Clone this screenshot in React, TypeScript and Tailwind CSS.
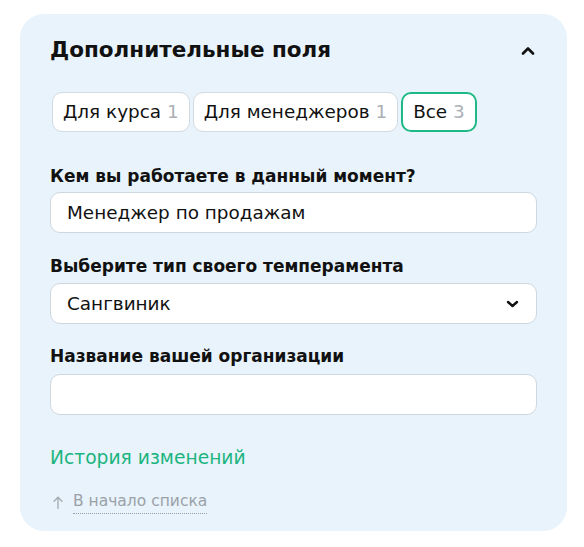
import React from "react";

function ChevronUp() {
  return (
    <svg width="14" height="9" viewBox="0 0 14 9" fill="none">
      <path d="M2 7.5L7 2.5L12 7.5" stroke="#111" strokeWidth="2.6" strokeLinecap="round" strokeLinejoin="round" />
    </svg>
  );
}

function ChevronDown() {
  return (
    <svg width="13" height="8" viewBox="0 0 13 8" fill="none">
      <path d="M2 2L6.5 6L11 2" stroke="#111" strokeWidth="2.4" strokeLinecap="round" strokeLinejoin="round" />
    </svg>
  );
}

function ArrowUp() {
  return (
    <svg width="10" height="13" viewBox="0 0 10 13" fill="none">
      <path d="M5 12.5V1.2M1 5.2L5 1.2L9 5.2" stroke="#a3a9b0" strokeWidth="1.3" strokeLinecap="round" strokeLinejoin="round" />
    </svg>
  );
}

function Tab({ label, count, active }: { label: string; count: number; active?: boolean }) {
  return (
    <button
      className={
        active
          ? "h-[40px] px-[10px] rounded-[10px] bg-white border-2 border-[#1fb985] text-[18.4px] text-[#111] whitespace-nowrap"
          : "h-[40px] px-[10px] rounded-[10px] bg-white border border-[#d3dbe2] text-[18.4px] text-[#111] whitespace-nowrap"
      }
    >
      {label} <span className="text-[#aab0b6]">{count}</span>
    </button>
  );
}

export default function App() {
  return (
    <div className="w-[584px] h-[547px] bg-white pt-[14px] pl-[20px] font-['DejaVu_Sans',sans-serif]">
      <div className="w-[547px] h-[517px] rounded-[24px] bg-[#e8f3fb] px-[30px] pt-[22px] flex flex-col">
        <div className="flex items-center justify-between h-[28px]">
          <h2 className="text-[21.5px] leading-[28px] font-bold text-[#111]">Дополнительные поля</h2>
          <div className="w-[18px] flex justify-center">
            <ChevronUp />
          </div>
        </div>

        <div className="mt-[28px] ml-[2px] flex gap-[3px]">
          <Tab label="Для курса" count={1} />
          <Tab label="Для менеджеров" count={1} />
          <Tab label="Все" count={3} active />
        </div>

        <div className="mt-[32px] flex flex-col">
          <label className="text-[17px] leading-[24px] font-bold text-[#111]">Кем вы работаете в данный момент?</label>
          <div className="mt-[4px] h-[41px] rounded-[10px] bg-white border border-[#cfd7df] flex items-center px-[16px] text-[18.4px] text-[#111]">
            Менеджер по продажам
          </div>

          <label className="mt-[21px] text-[17px] leading-[24px] font-bold text-[#111]">Выберите тип своего темперамента</label>
          <div className="mt-[5px] h-[41px] rounded-[10px] bg-white border border-[#cfd7df] flex items-center justify-between pl-[16px] pr-[17px] text-[18.4px] text-[#111]">
            <span>Сангвиник</span>
            <ChevronDown />
          </div>

          <label className="mt-[20px] text-[17px] leading-[24px] font-bold text-[#111]">Название вашей организации</label>
          <div className="mt-[6px] h-[41px] rounded-[10px] bg-white border border-[#cfd7df]" />
        </div>

        <div className="mt-[31px] text-[18.7px] leading-[24px] text-[#1cb57f]">История изменений</div>

        <div className="mt-[20px] ml-[3px] flex items-center gap-[10px] text-[15.5px] leading-[24px] text-[#9ba1a8]">
          <ArrowUp />
          <span className="border-b border-dotted border-[#9ba1a8] leading-[23px]">В начало списка</span>
        </div>
      </div>
    </div>
  );
}
